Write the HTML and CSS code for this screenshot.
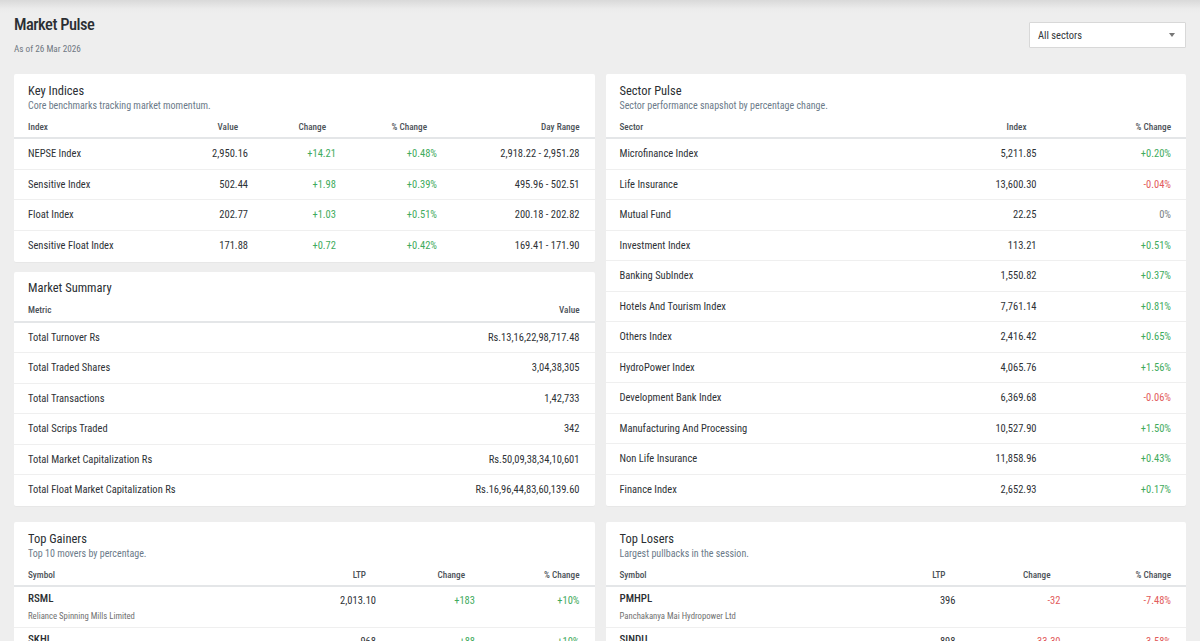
FILE: index.html
```html
<!DOCTYPE html>
<html lang="en">
<head>
<meta charset="utf-8">
<title>Market Pulse</title>
<link rel="stylesheet" href="styles.css">
</head>
<body>
<div class="page">
  <header class="top">
    <div class="heading">
      <h1 class="title">Market Pulse</h1>
      <div class="asof">As of 26 Mar 2026</div>
    </div>
    <div class="select">
      <span>All sectors</span>
      <span class="caret"></span>
    </div>
  </header>

  <div class="grid">
    <div class="stack">
      <section class="card">
        <div class="card-head">
          <h2 class="card-title">Key Indices</h2>
          <p class="card-sub">Core benchmarks tracking market momentum.</p>
        </div>
        <div class="tbl key">
          <div class="tr th"><div>Index</div><div class="r">Value</div><div class="r">Change</div><div class="r">% Change</div><div class="r">Day Range</div></div>
          <div class="tr"><div>NEPSE Index</div><div class="r">2,950.16</div><div class="r up">+14.21</div><div class="r up">+0.48%</div><div class="r">2,918.22 - 2,951.28</div></div>
          <div class="tr"><div>Sensitive Index</div><div class="r">502.44</div><div class="r up">+1.98</div><div class="r up">+0.39%</div><div class="r">495.96 - 502.51</div></div>
          <div class="tr"><div>Float Index</div><div class="r">202.77</div><div class="r up">+1.03</div><div class="r up">+0.51%</div><div class="r">200.18 - 202.82</div></div>
          <div class="tr last"><div>Sensitive Float Index</div><div class="r">171.88</div><div class="r up">+0.72</div><div class="r up">+0.42%</div><div class="r">169.41 - 171.90</div></div>
        </div>
      </section>

      <section class="card">
        <div class="card-head">
          <h2 class="card-title">Market Summary</h2>
        </div>
        <div class="tbl summary">
          <div class="tr th"><div>Metric</div><div class="r">Value</div></div>
          <div class="tr"><div>Total Turnover Rs</div><div class="r">Rs.13,16,22,98,717.48</div></div>
          <div class="tr"><div>Total Traded Shares</div><div class="r">3,04,38,305</div></div>
          <div class="tr"><div>Total Transactions</div><div class="r">1,42,733</div></div>
          <div class="tr"><div>Total Scrips Traded</div><div class="r">342</div></div>
          <div class="tr"><div>Total Market Capitalization Rs</div><div class="r">Rs.50,09,38,34,10,601</div></div>
          <div class="tr last"><div>Total Float Market Capitalization Rs</div><div class="r">Rs.16,96,44,83,60,139.60</div></div>
        </div>
      </section>
    </div>

    <section class="card">
      <div class="card-head">
        <h2 class="card-title">Sector Pulse</h2>
        <p class="card-sub">Sector performance snapshot by percentage change.</p>
      </div>
      <div class="tbl sector">
        <div class="tr th"><div>Sector</div><div class="r">Index</div><div class="r">% Change</div></div>
        <div class="tr"><div>Microfinance Index</div><div class="r">5,211.85</div><div class="r up">+0.20%</div></div>
        <div class="tr"><div>Life Insurance</div><div class="r">13,600.30</div><div class="r down">-0.04%</div></div>
        <div class="tr"><div>Mutual Fund</div><div class="r">22.25</div><div class="r flat">0%</div></div>
        <div class="tr"><div>Investment Index</div><div class="r">113.21</div><div class="r up">+0.51%</div></div>
        <div class="tr"><div>Banking SubIndex</div><div class="r">1,550.82</div><div class="r up">+0.37%</div></div>
        <div class="tr"><div>Hotels And Tourism Index</div><div class="r">7,761.14</div><div class="r up">+0.81%</div></div>
        <div class="tr"><div>Others Index</div><div class="r">2,416.42</div><div class="r up">+0.65%</div></div>
        <div class="tr"><div>HydroPower Index</div><div class="r">4,065.76</div><div class="r up">+1.56%</div></div>
        <div class="tr"><div>Development Bank Index</div><div class="r">6,369.68</div><div class="r down">-0.06%</div></div>
        <div class="tr"><div>Manufacturing And Processing</div><div class="r">10,527.90</div><div class="r up">+1.50%</div></div>
        <div class="tr"><div>Non Life Insurance</div><div class="r">11,858.96</div><div class="r up">+0.43%</div></div>
        <div class="tr last"><div>Finance Index</div><div class="r">2,652.93</div><div class="r up">+0.17%</div></div>
      </div>
    </section>

    <section class="card">
      <div class="card-head">
        <h2 class="card-title">Top Gainers</h2>
        <p class="card-sub">Top 10 movers by percentage.</p>
      </div>
      <div class="tbl movers gain">
        <div class="tr th"><div>Symbol</div><div class="r">LTP</div><div class="r">Change</div><div class="r">% Change</div></div>
        <div class="tr mv"><div><div class="sym">RSML</div><div class="co">Reliance Spinning Mills Limited</div></div><div class="r num">2,013.10</div><div class="r num up">+183</div><div class="r num up">+10%</div></div>
        <div class="tr mv"><div><div class="sym">SKHL</div><div class="co">Super Khudi Hydropower Limited</div></div><div class="r num">968</div><div class="r num up">+88</div><div class="r num up">+10%</div></div>
        <div class="tr mv"><div><div class="sym">SHEL</div><div class="co">Singati Hydro Energy Limited</div></div><div class="r num">412</div><div class="r num up">+37</div><div class="r num up">+9.87%</div></div>
      </div>
    </section>

    <section class="card">
      <div class="card-head">
        <h2 class="card-title">Top Losers</h2>
        <p class="card-sub">Largest pullbacks in the session.</p>
      </div>
      <div class="tbl movers lose">
        <div class="tr th"><div>Symbol</div><div class="r">LTP</div><div class="r">Change</div><div class="r">% Change</div></div>
        <div class="tr mv"><div><div class="sym">PMHPL</div><div class="co">Panchakanya Mai Hydropower Ltd</div></div><div class="r num">396</div><div class="r num down">-32</div><div class="r num down">-7.48%</div></div>
        <div class="tr mv"><div><div class="sym">SINDU</div><div class="co">Sindhu Bikash Bank Ltd</div></div><div class="r num">898</div><div class="r num down">-33.30</div><div class="r num down">-3.58%</div></div>
        <div class="tr mv"><div><div class="sym">MKHL</div><div class="co">Maya Khola Hydropower Company Limited</div></div><div class="r num">305</div><div class="r num down">-9.80</div><div class="r num down">-3.11%</div></div>
      </div>
    </section>
  </div>
</div>
</body>
</html>
```

FILE: styles.css
```css
* { box-sizing: border-box; }

html, body { margin: 0; padding: 0; }

body {
  background: linear-gradient(#d9d9d9 0, #ececec 9px, #eeeeee 14px) no-repeat, #eeeeee;
  font-family: "Roboto Condensed", "Liberation Sans Narrow", "DejaVu Sans Condensed", Roboto, sans-serif;
  color: #2e3236;
  font-size: 10.5px;
}

.page { padding: 14px 14px 0; }

.top {
  display: flex;
  justify-content: space-between;
  align-items: flex-start;
  height: 60px;
}

.title {
  margin: 0;
  font-size: 16.5px;
  line-height: 22px;
  font-weight: 500;
  color: #2b2f33;
  letter-spacing: -0.5px;
}

.asof {
  margin-top: 7px;
  font-size: 9.2px;
  line-height: 12px;
  color: #6f7882;
}

.select {
  margin-top: 8px;
  width: 157px;
  height: 26px;
  background: #fff;
  border: 1px solid #d8d8d8;
  border-radius: 1px;
  display: flex;
  align-items: center;
  justify-content: space-between;
  padding: 0 10px 0 8px;
  font-size: 10.5px;
  color: #33373b;
}

.caret {
  width: 0;
  height: 0;
  border-left: 3.5px solid transparent;
  border-right: 3.5px solid transparent;
  border-top: 4px solid #777;
}

.grid {
  display: grid;
  grid-template-columns: 1fr 1fr;
  column-gap: 11px;
  row-gap: 16px;
  align-items: start;
}

.stack {
  display: flex;
  flex-direction: column;
  gap: 10px;
}

.card {
  background: #fff;
  border-radius: 2px;
  box-shadow: 0 1px 1px rgba(0, 0, 0, 0.03);
}

.card-head { padding: 8.5px 15px 2.5px 14px; }

.card-title {
  margin: 0;
  font-size: 12.5px;
  line-height: 16px;
  font-weight: 400;
  color: #2b2f33;
}

.card-sub {
  margin: 0;
  font-size: 10px;
  line-height: 14px;
  color: #6b7a89;
}

.tbl { padding-bottom: 0.5px; }

.tr {
  display: grid;
  align-items: center;
  height: 30.5px;
  padding: 0 15px 0 14px;
  border-bottom: 1px solid #efefef;
  white-space: nowrap;
}

.tr.last { border-bottom-color: transparent; }

.tr.th {
  height: 24px;
  border-bottom: 2px solid #e4e6e8;
  font-size: 9.2px;
  font-weight: 500;
  color: #4c5258;
}

.tr.th .r { padding-right: 10px; }
.tr.th .r:last-child { padding-right: 0; }

.r { text-align: right; }

.key .tr { grid-template-columns: 120px 100px 88px 101px 1fr; }
.summary .tr { grid-template-columns: 1fr auto; }
.sector .tr { grid-template-columns: 300px 117px 1fr; }
.gain .tr { grid-template-columns: 248px 100px 99px 1fr; }
.lose .tr { grid-template-columns: 236px 100px 105px 1fr; }

.tr.mv {
  height: 41px;
  align-items: start;
  padding-top: 5px;
}

.sym {
  font-size: 11px;
  line-height: 13px;
  font-weight: 500;
  color: #2b2f33;
}

.co {
  margin-top: 5px;
  font-size: 8.7px;
  line-height: 12px;
  color: #707070;
}

.num {
  padding-top: 2px;
  font-size: 10.5px;
  line-height: 13px;
}

.up { color: #3fab5d; }
.down { color: #e25b5b; }
.flat { color: #7a7f85; }
```
